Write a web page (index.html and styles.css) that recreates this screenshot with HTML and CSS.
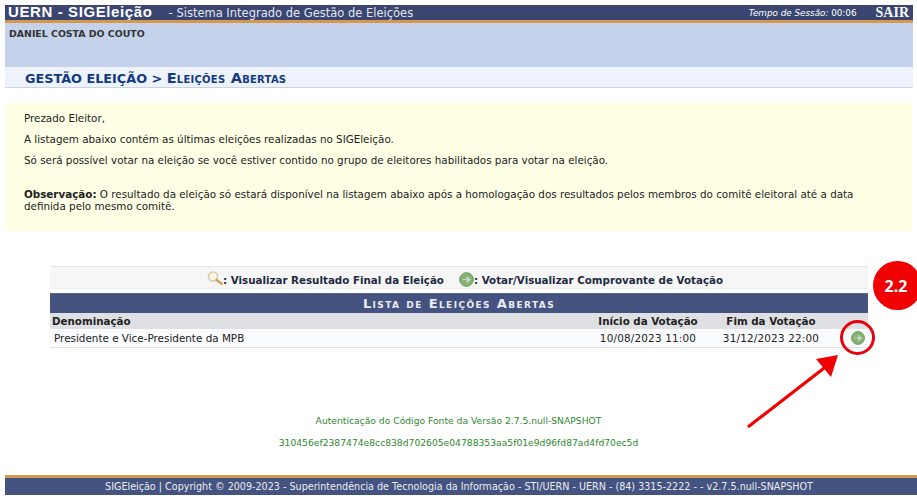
FILE: index.html
```html
<!DOCTYPE html>
<html lang="pt-BR">
<head>
    <meta charset="UTF-8">
    <title>SIGEleição</title>
    <link rel="stylesheet" href="styles.css">
</head>
<body>
<div class="page">
    <div class="top-bar">
        <div class="top-title">
            <span class="top-name">UERN - SIGEleição</span>
            <span class="top-sub">- Sistema Integrado de Gestão de Eleições</span>
        </div>
        <div class="top-right">
            <span class="top-time"><em>Tempo de Sessão:</em> 00:06</span>
            <a href="#" class="top-exit">SAIR</a>
        </div>
    </div>
    <div class="user-info">DANIEL COSTA DO COUTO</div>
    <div class="breadcrumb"><span>GESTÃO ELEIÇÃO &gt;</span> <span class="breadcrumb-sub">Eleições Abertas</span></div>

    <div class="notice">
        <p>Prezado Eleitor,</p>
        <p>A listagem abaixo contém as últimas eleições realizadas no SIGEleição.</p>
        <p>Só será possível votar na eleição se você estiver contido no grupo de eleitores habilitados para votar na eleição.</p>
        <p class="notice-obs"><b>Observação:</b> O resultado da eleição só estará disponível na listagem abaixo após a homologação dos resultados pelos membros do comitê eleitoral até a data definida pelo mesmo comitê.</p>
    </div>

    <div class="list-box">
        <div class="legend">
            <svg class="icon-lens" width="16" height="14" viewBox="0 0 16 14">
                <circle cx="6" cy="5.5" r="4.6" fill="#f5f3ea" stroke="#dcc9a4" stroke-width="1.5"/>
                <path d="M9.6 9 L14.6 12.8" stroke="#cf9f62" stroke-width="2.4" stroke-linecap="round"/>
            </svg>
            <span class="legend-text">: Visualizar Resultado Final da Eleição</span>
            <svg class="icon-go legend-go" width="15" height="15" viewBox="0 0 16 16">
                <circle cx="8" cy="8" r="7.3" fill="#86b274" stroke="#5c9350" stroke-width="1"/>
                <path d="M3.6 8 H8.4 V5 L12.4 8 L8.4 11 V8" fill="#ccd6c8" stroke="#ccd6c8" stroke-width="1"/>
            </svg>
            <span class="legend-text">: Votar/Visualizar Comprovante de Votação</span>
        </div>
        <table class="list-table">
            <caption>Lista de Eleições Abertas</caption>
            <thead>
                <tr>
                    <th class="col-name">Denominação</th>
                    <th class="col-start">Início da Votação</th>
                    <th class="col-end">Fim da Votação</th>
                    <th class="col-action"></th>
                </tr>
            </thead>
            <tbody>
                <tr>
                    <td>Presidente e Vice-Presidente da MPB</td>
                    <td class="cell-date">10/08/2023 11:00</td>
                    <td class="cell-date">31/12/2023 22:00</td>
                    <td class="cell-action">
                        <svg class="icon-go" width="14" height="14" viewBox="0 0 16 16">
                            <circle cx="8" cy="8" r="7.3" fill="#86b274" stroke="#5c9350" stroke-width="1"/>
                            <path d="M3.6 8 H8.4 V5 L12.4 8 L8.4 11 V8" fill="#ccd6c8" stroke="#ccd6c8" stroke-width="1"/>
                        </svg>
                    </td>
                </tr>
            </tbody>
        </table>
    </div>

    <div class="auth">
        <p>Autenticação do Código Fonte da Versão 2.7.5.null-SNAPSHOT</p>
        <p>310456ef2387474e8cc838d702605e04788353aa5f01e9d96fd87ad4fd70ec5d</p>
    </div>

    <div class="footer">SIGEleição | Copyright © 2009-2023 - Superintendência de Tecnologia da Informação - STI/UERN - UERN - (84) 3315-2222 - - v2.7.5.null-SNAPSHOT</div>
</div>

<!-- marcacoes vermelhas por cima da tela -->
<div class="step-badge">2.2</div>
<div class="step-ring"></div>
<svg class="step-arrow" width="110" height="90" viewBox="0 0 110 90">
    <path d="M2 73 L82 11" stroke="#f00000" stroke-width="3.2"/>
    <path d="M92 1 L85 23 L70 5 Z" fill="#f00000"/>
</svg>
</body>
</html>
```

FILE: styles.css
```css
* {
    box-sizing: border-box;
}
body {
    margin: 0;
    background: #fff;
    font-family: "DejaVu Sans", Verdana, sans-serif;
    font-size: 10px;
    color: #222;
    overflow: hidden;
}
p {
    margin: 0;
}
.page {
    position: relative;
    height: 499px;
    padding-top: 5px;
}

/* topo */
.top-bar {
    display: flex;
    justify-content: space-between;
    margin: 0 4px 0 5px;
    height: 18px;
    padding: 0 4px 0 3px;
    background: #3a4570;
    border-bottom: 3px solid #d6984c;
    color: #fff;
    line-height: 14px;
}
.top-name {
    font-family: "Liberation Sans", Arial, sans-serif;
    font-size: 15px;
    font-weight: bold;
    letter-spacing: .6px;
}
.top-sub {
    margin-left: 13px;
    font-size: 11.5px;
    color: #e4e7f0;
}
.top-right {
    display: flex;
    align-items: center;
}
.top-time {
    font-size: 8.8px;
}
.top-exit {
    margin-left: 19px;
    font-family: "Liberation Serif", "Times New Roman", serif;
    font-size: 14px;
    font-weight: bold;
    color: #fff;
    text-decoration: none;
}
.user-info {
    margin: 0 4px 0 5px;
    height: 44px;
    padding: 5px 5px 0 4px;
    background: #c4d2eb;
    font-size: 9.4px;
    font-weight: bold;
    color: #333;
}
.breadcrumb {
    margin: 0 4px 0 5px;
    height: 21px;
    padding: 3px 0 0 20px;
    background: #edf2fb;
    border-bottom: 1px solid #c9d5e6;
    font-size: 12.8px;
    font-weight: bold;
    color: #123a82;
    line-height: 16px;
}
.breadcrumb-sub {
    font-variant: small-caps;
    font-size: 14.5px;
    letter-spacing: .25px;
}

/* aviso */
.notice {
    margin: 15px 5px 0;
    height: 128px;
    padding: 9px 19px 0;
    background: #ffffe6;
    font-size: 10.35px;
    line-height: 12px;
}
.notice p {
    margin-bottom: 9px;
}
.notice .notice-obs {
    margin-top: 22px;
}

/* lista */
.list-box {
    width: 818px;
    margin: 35px 0 0 50px;
}
.legend {
    display: flex;
    justify-content: center;
    align-items: center;
    height: 23px;
    padding: 5px 0 0 12px;
    background: #f6f6f6;
    border-top: 1px solid #e6e6e6;
    border-bottom: 1px solid #ececec;
    font-size: 10.3px;
    font-weight: bold;
    color: #222a44;
}
.icon-lens {
    margin-bottom: 4px;
}
.legend-go {
    margin-left: 15px;
    margin-bottom: 1px;
}
.list-table {
    width: 100%;
    margin-top: 4px;
    border-collapse: collapse;
    table-layout: fixed;
}
.list-table caption {
    height: 20px;
    background: #44537f;
    border-top: 1px solid #5d6a93;
    color: #e9ecf4;
    font-variant: small-caps;
    font-weight: bold;
    font-size: 13px;
    letter-spacing: 1.4px;
    line-height: 19px;
    text-align: center;
}
.list-table th {
    height: 16px;
    padding: 0 2px;
    background: #dfe0e4;
    font-size: 10.3px;
    color: #222;
    text-align: left;
}
.list-table td {
    height: 18px;
    padding: 0 4px;
    background: #fafbfd;
    border-bottom: 1px solid #e2e2e2;
    font-size: 10.4px;
}
.list-table .col-name {
    width: 537px;
}
.list-table .col-start {
    width: 122px;
    text-align: center;
}
.list-table .col-end {
    width: 124px;
    text-align: center;
}
.list-table .cell-date {
    text-align: center;
    letter-spacing: .2px;
}
.list-table .cell-action {
    padding: 2px 3px 0 0;
    text-align: right;
}

/* rodape */
.auth {
    margin-top: 66px;
    font-size: 9.2px;
    color: #2f8a2f;
    text-align: center;
}
.auth p {
    height: 22px;
    line-height: 14px;
}
.footer {
    position: absolute;
    left: 5px;
    right: 0;
    top: 475px;
    height: 20px;
    padding-right: 4px;
    background: #44537f;
    border-top: 3px solid #d6984c;
    color: #eceef5;
    font-size: 9.6px;
    line-height: 17px;
    text-align: center;
}

/* marcacoes */
.step-badge {
    position: absolute;
    left: 873px;
    top: 261px;
    width: 49px;
    height: 49px;
    border-radius: 50%;
    background: #f00000;
    color: #fff;
    font-family: "Open Sans", sans-serif;
    font-size: 16px;
    font-weight: bold;
    line-height: 50px;
    padding-right: 3px;
    text-align: center;
}
.step-ring {
    position: absolute;
    left: 840px;
    top: 320px;
    width: 35px;
    height: 35px;
    border: 3px solid #e8000f;
    border-radius: 50%;
}
.step-arrow {
    position: absolute;
    left: 746px;
    top: 354px;
}
```
